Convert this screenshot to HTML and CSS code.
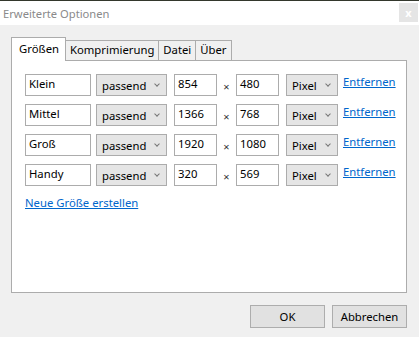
FILE: index.html
```html
<!DOCTYPE html>
<html>

<head>
    <meta charset="utf-8">
    <title>Erweiterte Optionen</title>
    <link rel="stylesheet" href="styles.css">
</head>

<body>

    <div class="window">

        <div class="titlebar">
            <span class="title">Erweiterte Optionen</span>
            <span class="close">x</span>
        </div>

        <div class="content">

            <div class="tabs">
                <span class="tab active">Größen</span>
                <span class="tab">Komprimierung</span>
                <span class="tab">Datei</span>
                <span class="tab">Über</span>
            </div>

            <div class="panel">

                <div class="row">
                    <span class="field name">Klein</span>
                    <span class="select mode">passend <i class="arrow"></i></span>
                    <span class="field num">854</span>
                    <span class="times">×</span>
                    <span class="field num">480</span>
                    <span class="select unit">Pixel <i class="arrow"></i></span>
                    <a href="#" class="link">Entfernen</a>
                </div>

                <div class="row">
                    <span class="field name">Mittel</span>
                    <span class="select mode">passend <i class="arrow"></i></span>
                    <span class="field num">1366</span>
                    <span class="times">×</span>
                    <span class="field num">768</span>
                    <span class="select unit">Pixel <i class="arrow"></i></span>
                    <a href="#" class="link">Entfernen</a>
                </div>

                <div class="row">
                    <span class="field name">Groß</span>
                    <span class="select mode">passend <i class="arrow"></i></span>
                    <span class="field num">1920</span>
                    <span class="times">×</span>
                    <span class="field num">1080</span>
                    <span class="select unit">Pixel <i class="arrow"></i></span>
                    <a href="#" class="link">Entfernen</a>
                </div>

                <div class="row">
                    <span class="field name">Handy</span>
                    <span class="select mode">passend <i class="arrow"></i></span>
                    <span class="field num">320</span>
                    <span class="times">×</span>
                    <span class="field num">569</span>
                    <span class="select unit">Pixel <i class="arrow"></i></span>
                    <a href="#" class="link">Entfernen</a>
                </div>

                <a href="#" class="link newsize">Neue Größe erstellen</a>

            </div>

            <div class="buttons">
                <button class="btn">OK</button>
                <button class="btn">Abbrechen</button>
            </div>

        </div>

    </div>

</body>

</html>
```

FILE: styles.css
```css
body {
    margin: 0;
    font-family: "Noto Sans", "Open Sans", sans-serif;
    font-size: 11.3px;
    color: #000;
    background-color: #f0f0f0;
}

.window {
    width: 419px;
    height: 337px;
    border-top: 1px solid #33372c;
    box-sizing: border-box;
    overflow: hidden;
}

.titlebar {
    height: 24px;
    background-color: #fff;
    display: flex;
    justify-content: space-between;
    align-items: center;
}

.title {
    margin-left: 3px;
    color: #8a8a8a;
    font-size: 11.2px;
}

.close {
    width: 19px;
    height: 19px;
    margin-right: 1px;
    margin-top: -2px;
    background-color: #e5e5e5;
    color: #fff;
    font-size: 11px;
    font-weight: bold;
    display: flex;
    justify-content: center;
    align-items: center;
}

.content {
    padding: 12px 12px 0 11px;
}

/* Reiter */

.tabs {
    display: flex;
    align-items: flex-end;
    height: 23px;
}

.tab {
    height: 20px;
    padding: 0 4px;
    border: 1px solid #acacac;
    border-bottom: none;
    border-left: none;
    box-sizing: border-box;
    background-color: #f0f0f0;
    line-height: 18px;
}

.tab.active {
    height: 24px;
    padding: 0 6px 0 7px;
    border-left: 1px solid #acacac;
    background-color: #fff;
    line-height: 22px;
    margin-bottom: -1px;
    position: relative;
    z-index: 1;
}

.panel {
    height: 233px;
    box-sizing: border-box;
    border: 1px solid #acacac;
    background-color: #fff;
    padding: 13px 0 0 13px;
}

.row {
    display: flex;
    align-items: center;
    height: 22px;
    margin-bottom: 8px;
}

.field {
    height: 22px;
    box-sizing: border-box;
    border: 1px solid #acacac;
    padding-left: 3px;
    line-height: 18px;
}

.name {
    width: 66px;
    margin-right: 5px;
}

.num {
    width: 43px;
}

.select {
    height: 22px;
    box-sizing: border-box;
    border: 1px solid #acacac;
    background-color: #e5e5e5;
    padding-left: 5px;
    line-height: 22px;
    position: relative;
}

.mode {
    width: 71px;
    margin-right: 7px;
}

.unit {
    width: 52px;
    margin-left: 7px;
    margin-right: 5px;
}

.arrow {
    position: absolute;
    right: 7px;
    top: 7px;
    width: 3px;
    height: 3px;
    border-right: 1px solid #777;
    border-bottom: 1px solid #777;
    transform: rotate(45deg);
}

.times {
    width: 19px;
    text-align: center;
    font-size: 11px;
    color: #333;
    padding-top: 3px;
}

.link {
    color: #0066cc;
    text-decoration: underline;
    line-height: 14px;
    margin-top: -6px;
}

.newsize {
    display: inline-block;
    margin-top: 2px;
}

.buttons {
    display: flex;
    justify-content: flex-end;
    gap: 7px;
    margin-top: 12px;
}

.btn {
    width: 75px;
    height: 23px;
    border: 1px solid #adadad;
    background-color: #e1e1e1;
    font-family: "Noto Sans", "Open Sans", sans-serif;
    font-size: 11.3px;
    color: #000;
    padding: 0;
}
```
